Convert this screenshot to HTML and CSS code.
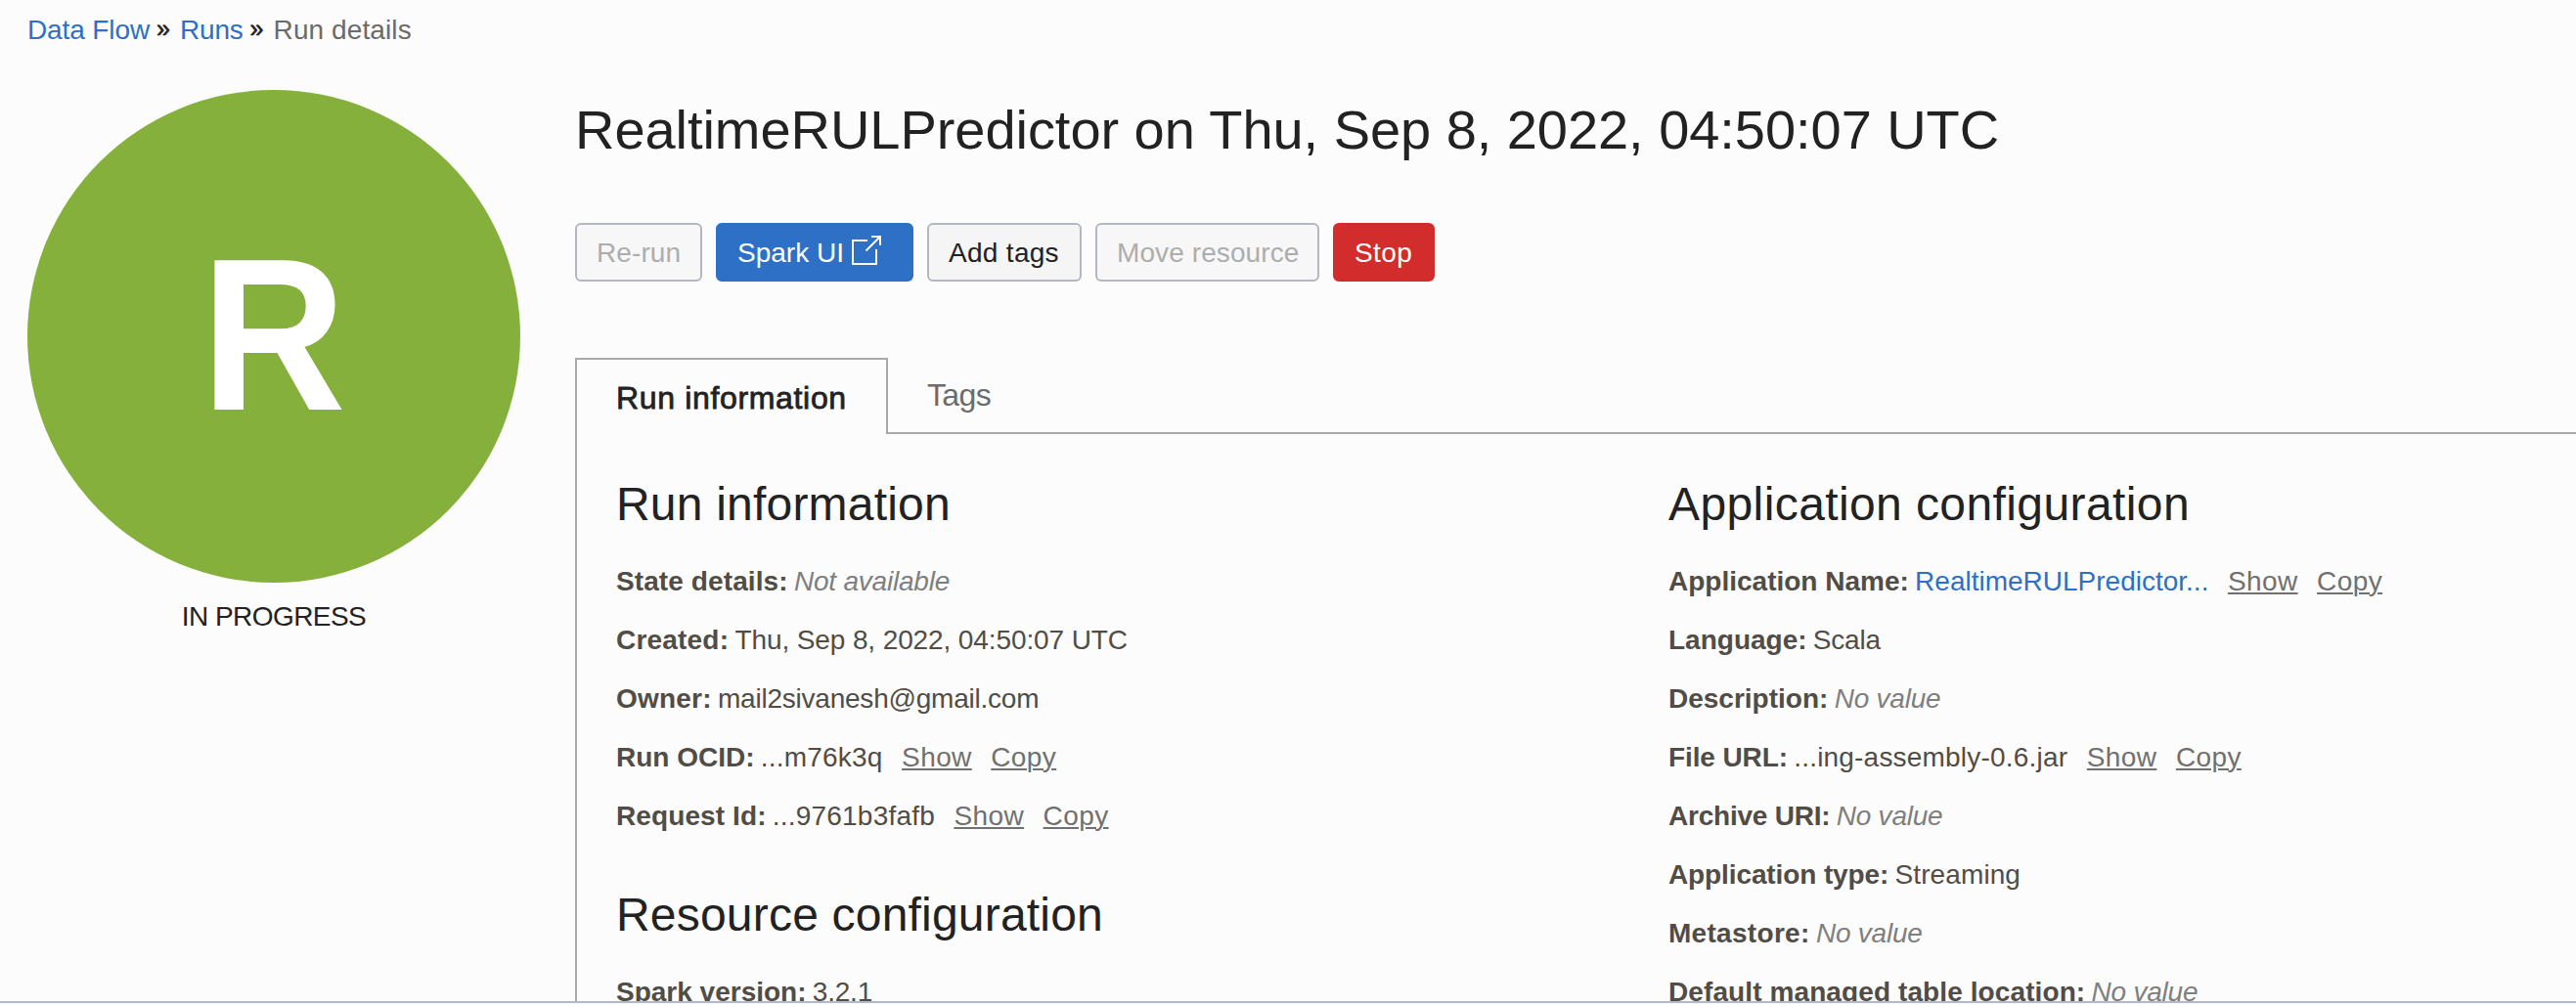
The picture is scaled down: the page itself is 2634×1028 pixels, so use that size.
FILE: index.html
```html
<!DOCTYPE html>
<html lang="en">
<head>
<meta charset="utf-8">
<title>Run details</title>
<link rel="stylesheet" href="styles.css">
</head>
<body>
<div class="page">
  <nav class="breadcrumb">
    <a class="link tight-1" href="#">Data Flow</a><span class="sep">»</span><a class="link tight-2" href="#">Runs</a><span class="sep">»</span><span class="current loose-1">Run details</span>
  </nav>
  <div class="layout">
    <aside class="status">
      <div class="badge"><span class="badge-letter">R</span></div>
      <div class="state">IN PROGRESS</div>
    </aside>
    <main class="main">
      <h1 class="title">RealtimeRULPredictor on Thu, Sep 8, 2022, 04:50:07 UTC</h1>
      <div class="actions">
        <button class="btn rerun disabled loose-1" disabled>Re-run</button>
        <button class="btn spark primary">Spark UI<svg class="external" width="30" height="30" viewBox="0 0 30 30" fill="none" stroke="currentColor" stroke-width="2"><path d="M16 5H1V29H25V14"/><path d="M20 1H29V10M14.5 15.5L28.5 1.5"/></svg></button>
        <button class="btn add-tags loose-3">Add tags</button>
        <button class="btn move disabled loose-1" disabled>Move resource</button>
        <button class="btn stop danger loose-4">Stop</button>
      </div>
      <div class="tabs">
        <div class="tab active">Run information</div>
        <div class="tab">Tags</div>
      </div>
      <div class="panel">
        <div class="column">
          <section class="group">
            <h2 class="loose-2">Run information</h2>
            <div class="row"><b class="loose-1">State details:</b> <i class="tight-2">Not available</i></div>
            <div class="row"><b class="loose-2">Created:</b> <span class="tight-1">Thu, Sep 8, 2022, 04:50:07 UTC</span></div>
            <div class="row"><b class="loose-2">Owner:</b> <span class="tight-2">mail2sivanesh@gmail.com</span></div>
            <div class="row"><b>Run OCID:</b> <span class="loose-2">...m76k3q</span><a class="action loose-4" href="#">Show</a><a class="action loose-4" href="#">Copy</a></div>
            <div class="row"><b class="loose-1">Request Id:</b> <span class="loose-2">...9761b3fafb</span><a class="action loose-4" href="#">Show</a><a class="action loose-4" href="#">Copy</a></div>
          </section>
          <section class="group">
            <h2 class="loose-2">Resource configuration</h2>
            <div class="row"><b>Spark version:</b> <span class="tight-2">3.2.1</span></div>
          </section>
        </div>
        <div class="column">
          <section class="group">
            <h2 class="loose-4">Application configuration</h2>
            <div class="row"><b>Application Name:</b> <a class="link" href="#">RealtimeRULPredictor...</a><a class="action loose-4" href="#">Show</a><a class="action loose-4" href="#">Copy</a></div>
            <div class="row"><b>Language:</b> <span class="tight-2">Scala</span></div>
            <div class="row"><b>Description:</b> <i class="tight-2">No value</i></div>
            <div class="row"><b class="tight-1">File URL:</b> <span class="loose-2">...ing-assembly-0.6.jar</span><a class="action loose-4" href="#">Show</a><a class="action loose-4" href="#">Copy</a></div>
            <div class="row"><b class="tight-2">Archive URI:</b> <i class="tight-2">No value</i></div>
            <div class="row"><b class="tight-1">Application type:</b> <span class="loose-1">Streaming</span></div>
            <div class="row"><b class="loose-3">Metastore:</b> <i class="tight-2">No value</i></div>
            <div class="row"><b class="loose-1">Default managed table location:</b> <i class="tight-2">No value</i></div>
          </section>
        </div>
      </div>
    </main>
  </div>
</div>
</body>
</html>
```
FILE: styles.css
```css
* { box-sizing: border-box; }

body {
  margin: 0;
  background: #fcfcfc;
  color: #222;
  font-family: "Liberation Sans", Arial, sans-serif;
  font-size: 28px;
  overflow: hidden;
}

.page {
  height: 1026px;
  overflow: hidden;
  border-bottom: 2px solid #b3b8c0;
}

.link { color: #2d70c6; text-decoration: none; }

/* Tracking */
.tight-1 { letter-spacing: -0.11px; }
.tight-2 { letter-spacing: -0.22px; }
.loose-1 { letter-spacing: 0.1px; }
.loose-2 { letter-spacing: 0.2px; }
.loose-3 { letter-spacing: 0.3px; }
.loose-4 { letter-spacing: 0.4px; }

/* Breadcrumb */
.breadcrumb {
  display: flex;
  height: 60px;
  padding-left: 28px;
  line-height: 62px;
}

.sep {
  width: 31px;
  padding-right: 3px;
  text-align: center;
  font-size: 25px;
  line-height: 58px;
  -webkit-text-stroke: 0.6px #222;
}

.current { color: #6b6b6b; }

/* Page body */
.layout { display: flex; gap: 56px; }

.status { flex: none; width: 504px; margin: 32px 0 0 28px; }

.badge {
  height: 504px;
  padding-right: 1px;
  border-radius: 50%;
  background: #86b03c;
  color: #fff;
  font-size: 221px;
  font-weight: bold;
  line-height: 501px;
  text-align: center;
}

.badge-letter { display: inline-block; transform: scaleX(0.927); }

.state {
  margin-top: 14px;
  line-height: 42px;
  text-align: center;
  letter-spacing: -0.55px;
}

.main { flex: 1; min-width: 0; padding-top: 40px; }

.title {
  height: 64px;
  margin: 0 0 64px;
  font-size: 56px;
  font-weight: normal;
  line-height: 66px;
  letter-spacing: -0.05px;
}

/* Buttons */
.actions { display: flex; gap: 14px; margin-bottom: 78px; }

.btn {
  display: flex;
  align-items: center;
  height: 60px;
  padding: 2px 20px 0;
  border: 2px solid #b3b8c0;
  border-radius: 6px;
  background: #f5f5f5;
  color: #222;
  font-family: inherit;
  font-size: 28px;
  line-height: 54px;
  white-space: nowrap;
}

.rerun { width: 130px; }
.spark { width: 202px; }
.add-tags { width: 158px; }
.move { width: 229px; }
.stop { width: 104px; }

.disabled { background: #f7f7f7; color: #adadad; }
.primary { border-color: #2d70c6; background: #2d70c6; color: #fff; }
.danger { border-color: #d32c2c; background: #d32c2c; color: #fff; }

.external { flex: none; margin: 0 0 6px 8px; }

/* Tabs */
.tabs { display: flex; height: 78px; font-size: 32px; }

.tab {
  flex: 1;
  padding-left: 40px;
  border-bottom: 2px solid #a9a9a9;
  color: #6b6b6b;
  line-height: 76px;
  letter-spacing: -0.65px;
}

.tab.active {
  flex: none;
  width: 320px;
  border: 2px solid #a9a9a9;
  border-bottom: 0;
  color: #222;
  line-height: 78px;
  letter-spacing: 0.66px;
  -webkit-text-stroke: 0.8px #222;
}

/* Details */
.panel {
  display: grid;
  grid-template-columns: 1076px 1fr;
  padding-left: 40px;
  border-left: 2px solid #a9a9a9;
}

.group { padding-top: 41px; }

h2 {
  height: 60px;
  margin: 0 0 19px;
  font-size: 48px;
  font-weight: normal;
  line-height: 62px;
}

.row {
  height: 60px;
  color: #514d46;
  line-height: 62px;
  white-space: nowrap;
}

.row b { margin-right: -1.5px; }
.row i { color: #7f7f7f; }

.action {
  margin-left: 19.5px;
  color: #707070;
  text-decoration: underline;
  text-decoration-thickness: 2px;
  text-underline-offset: 2px;
}
```
